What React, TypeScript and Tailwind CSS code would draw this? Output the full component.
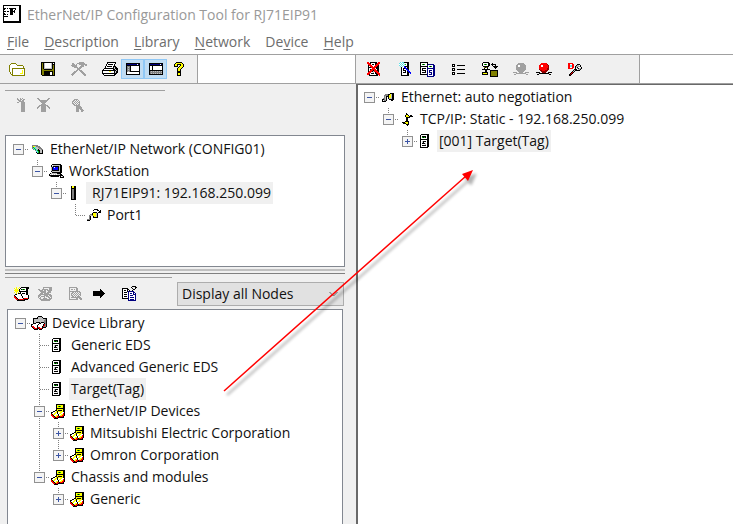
import { useState } from 'react';
import type { ReactNode } from 'react';

const COLORS: Record<string, string> = {
  k: '#000000',
  d: '#404040',
  g: '#808080',
  a: '#a0a0a0',
  s: '#c0c0c0',
  w: '#ffffff',
  o: '#808000',
  y: '#ffff00',
  r: '#ff0000',
  m: '#900000',
  G: '#00c000',
  b: '#0000ff',
  n: '#000080',
  c: '#60e0e8',
};

// Each string is one row of pixels, a dot is transparent.
// The first row sets the width of the icon.
const ICONS = {
  app: [
    'kkkkkkkkkkkkkkkkkk',
    'kwwwwwwwwwwwwwwwkk',
    'kwwwwwwwwwwwwwwwkk',
    'kkkwkwkkkkkkkwwwkk',
    'kkwwwwwkkkwwkwwwkk',
    'kwwwwwwkkkwkwwwwkk',
    'kkkwkkwkkkkkwwwwkk',
    'kwwwwwwkkkwkwwwwkk',
    'kkwwwwwkkkwwwwwwkk',
    'kkkwkwwkkkwwwwwwkk',
    'kwwwwwwwwwwwwwwwkk',
    'kkkkkwwwwwwwwwwwkk',
    'kwwwwwwwwwwwwwwwkk',
    'kwwwwwwwwwwwwwwwkk',
    'kwwwwwwwwwwwwwwwkk',
    'kwwwwwwwwwwwwwwwkk',
    'kkkkkkkkkkkkkkkkkk',
    'kkkkkkkkkkkkkkkkkk',
  ],
  open: [
    '..ooooo.........',
    '.owwwwwo........',
    'owwwwwwwoooooo..',
    'owwwwwwwwwwwwwo.',
    'owwwwwwwwwwwwwo.',
    'owwooooooooooooo',
    'owwowwwwwwwwwwwo',
    'owwowwwwwwwwwywo',
    'owwowwwwwwwwwywo',
    '.owowwwwwwwwwywo',
    '.owowwwwwwwyyywo',
    '..oowwwwwwwwwwwo',
    '...ooooooooooooo',
  ],
  save: [
    'kkkkkkkkkkkkkk',
    'kokswwwwwwskwk',
    'kokswwwwwwskkk',
    'kokswwwwwwskok',
    'kokswwwwwwskok',
    'kokswwwwwwskok',
    'koksssssssskok',
    'kookkkkkkkkook',
    'kooooooooooook',
    'kookkkkkkkkkok',
    'kookkkkkkwwkok',
    'kookkkkkkwwkok',
    'kookkkkkkwwkok',
    '.kkkkkkkkkkkkk',
  ],
  tools: [
    '........aaaaa...',
    '.aa...aaaaaaaa..',
    '.aaa.a..aaaaaaaa',
    'aaaaaa....aaa.aa',
    '.aaaaa...aaaa...',
    '...aaaa.aaa.....',
    '......aaaa......',
    '......aaa.......',
    '.....aa.aaa.....',
    '...aaa...aaa....',
    '..aaa.....aaa...',
    '.aaa.......aaa..',
    'aaa.........aaa.',
    '.a...........aa.',
  ],
  print: [
    '.....kkkkkkkkk..',
    '.....kwwwwwwwk..',
    '....kwkkkkkwk...',
    '....kwwwwwwwk...',
    '...kwkkkkkwkkk..',
    '...kwwwwwwwkskk.',
    '..kkkkkkkkkkskkk',
    '.kwwwwwwwwwkkskk',
    'kkkkkkkkkkkkkksk',
    'kwwwwwwyywwwkskk',
    'kwwwwwwwwwwwkskk',
    'kkkkkkkkkkkkkkk.',
    '.kwwwwwwwwwwkk..',
    '..kkkkkkkkkkk...',
  ],
  viewLeft: [
    'kkkkkkkkkkkkkk',
    'knnnnnnnnnnwnk',
    'kkkkkkkkkkkkkk',
    'kgggkwwwwwwwwk',
    'kgsgkwwwwwwwwk',
    'kgggkwwwwwwwwk',
    'kgsgkwwwwwwwwk',
    'kgggkwwwwwwwwk',
    'kgsgkkkkkkkkkk',
    'kwwwwwwwwwwwwk',
    'kwwwwwwwwwwwwk',
    'kkkkkkkkkkkkkk',
  ],
  viewRight: [
    'kkkkkkkkkkkkkk',
    'knnnnnnnnnnwnk',
    'kkkkkkkkkkkkkk',
    'kwwkwwwwwwwwwk',
    'kwwkwwwwwwwwwk',
    'kwwkwwwwwwwwwk',
    'kwwkwwwwwwwwwk',
    'kkkkkkkkkkkkkk',
    'kgsgsgsgsgsgsk',
    'kggggggggggggk',
    'kgsgsgsgsgsgsk',
    'kkkkkkkkkkkkkk',
  ],
  help: [
    '..kkkkkk..',
    '.kyyyyyyk.',
    'kyykkkkyyk',
    'kyyk..kyyk',
    'kkkk.kyyyk',
    '....kyyyk.',
    '...kyyyk..',
    '...kyyk...',
    '...kyyk...',
    '...kkkk...',
    '...kkkk...',
    '...kyyk...',
    '...kyyk...',
    '...kkkk...',
  ],
  online: [
    'a..a.a..',
    'aa.aa.aa',
    '.aaa.aa.',
    '..aaaaa.',
    'aa..aaaa',
    '....aaaa',
    '....aaaa',
    '....aaaa',
    '....aaaa',
    '....aaaa',
    '....aaaa',
    '....aaaa',
    '....aaaa',
    '....aaaa',
  ],
  offline: [
    'aa.........aa',
    '.aa.......aa.',
    '..aaaaaaaaa..',
    '...aaaaaaa...',
    '....aaaaa....',
    '.....aaa.....',
    '....aaaaa....',
    '..aaaaaaaaa..',
    '.aa.aaaaa.aa.',
    'aa..aaaaa..aa',
    'a...aaaaa...a',
    '....aaaaa....',
    '....aaaaa....',
    '....aaaaa....',
  ],
  search: [
    '..aaaa......',
    '.aa.a.a.....',
    'aa.a.a.a....',
    'a.a.a.aa....',
    'aa.a.a.a....',
    '.aa.a.aa....',
    '..aaaaaa....',
    '....aaaaa...',
    '....aaaaaa..',
    '....aaaaaa..',
    '....aaa.aaa.',
    '....aaa..aaa',
    '....aaa..aa.',
  ],
  server: [
    '.kkkkkkkk....',
    'kwwwwwwkk',
    'kwkkkkwkk',
    'kwGkGkwkk',
    'kwwwwwwkk',
    'kkkkkkkkk',
    'kwwwwwwkk',
    'kwskkkwkk',
    'kwskwwwkk',
    'kwkkkswkk',
    'kwwwwswkk',
    'kwkkkkwkk',
    'kwwwwwwkk',
    'kkkkkkkk.',
  ],
  removeServer: [
    'rr.kkkkkkk.rr',
    'rrrkwwwwkkrrr',
    '.rrrwkkwkrrr.',
    '.krrrwwwrrrk.',
    '.kwrrrwrrrkk.',
    '.kkkrrrrrkkk.',
    '.kwwwrrrwkkk.',
    '.kwkrrrrrwkk.',
    '.kwrrrkrrrkk.',
    '.krrrksrrrrk.',
    '.rrrwwswkrrr.',
    'rrrwkkkwkkrrr',
    'rrkwwwwwwkkrr',
    '..kkkkkkkkk.r',
  ],
  searchServer: [
    '.cwcckkkkk..',
    'cwcwcwwwkk..',
    'wcwcwcGwkk..',
    'cwcwcwwwkk..',
    '.cwcwbkkkk..',
    '..kwwbbwkk..',
    '..kwkkbbkk..',
    '..kwkwwbbk..',
    '..kwkkkwbb..',
    '..kwwwkwkbb.',
    '..kwkkkwkkbb',
    '..kwwwwwkk.b',
    '..kwwwwwkk..',
    '..kkkkkkkk..',
  ],
  compare: [
    'kkkkkkkk.......',
    'kwwwwwwk.......',
    'kwGkGwwknnnnnn.',
    'kwwwwwwnwwwwwnn',
    'kkkkkkkkwGkGwnn',
    'kwwwwwwnwwwwwnn',
    'kwkkkkwnnnnnnnn',
    'kwkwwwwnwwwwwnn',
    'kwkkkkwnwnnnwnn',
    'kwwwwkwnwnwwwnn',
    'kwkkkkwnwnnnwnn',
    'kwwwwwwnwwwnwnn',
    'kkkkkkknwnnnwnn',
    '.......nwwwwwnn',
    '.......nnnnnnn.',
  ],
  list: [
    'kkk..........',
    'kwk..kkkkkkkk',
    'kkk..........',
    '.............',
    'kkk..........',
    'kwk..kkkkkkkk',
    'kkk..........',
    '.............',
    'kkk..........',
    'kwk..kkkkkkkk',
    'kkk..........',
  ],
  transfer: [
    '.kkkkkk.........',
    'kwwwwwkk..k.....',
    'kwGkGwkk.kkkkk..',
    'kwwwwwkk..k..k..',
    '.kkkkkk....kkkkk',
    '..okok......kkk.',
    '..kwwk.......k..',
    'kkkkkkkk........',
    '...kk...kkkkkkkk',
    '...kk...kooooook',
    'kkkkkk..kooooook',
    'kyyyyk..kooooook',
    'kkkkkk..kooooook',
    '........kooooook',
    '........kkkkkkkk',
  ],
  ballGray: [
    '.....aaaaaa.....',
    '....aaaaaaaa....',
    '...aawwaaaaaa...',
    '...aawwaaaaaa...',
    '...aaaaaaaaaa...',
    '...aaaaaaaaaa...',
    '...aaaaaaaaaa...',
    '....aaaaaaaa....',
    '.....aaaaaa.....',
    'aaaa..aaaa..aaaa',
    '...aaaaaaaaaa...',
    '.aa..........aa.',
  ],
  ballRed: [
    '.....rrrrrr.....',
    '....rrrrrrrm....',
    '...rrwwrrrrrm...',
    '...rrwwrrrrrm...',
    '...rrrrrrrrrm...',
    '...rrrrrrrrmm...',
    '...mrrrrrrrmm...',
    '....mmrrrmmm....',
    '.....mmmmmm.....',
    'kkkk..mmmm..kkkk',
    '...kkkkkkkkkk...',
    '.kk..........kk.',
  ],
  diagnose: [
    'rrrrr.........',
    'rrwwrr...kkk..',
    'rrccrr..kaswk.',
    'rrccrr.kasaak.',
    'rrwwrr.kskwwwk',
    'rrrrr..kwaksak',
    '......kkkwsak.',
    '.....kskkkkk..',
    '....ksk.......',
    '...krk........',
    '..krk.........',
    '.kmk..........',
    '.kk...........',
  ],
  newDevice: [
    '..y..y.kkkkkkkk',
    'y.y.y.kwwwwwkkk',
    '.yyy.kwkGkGwkk.',
    'yyyyykwwwwwwkk.',
    '.yyy.kkkkkkkkk.',
    'y.y.y.kwwwwwkk.',
    '..y.kkkwkkkwkk.',
    '.kkwwwwkwwwwkk.',
    'kwwwwwwkwwwwwwk',
    'rkwwwwwwkwwwwwk',
    'rrkwwwwwkwwwwwk',
    '.rrkwwwwwkrrrrk',
    '..rrkrrrrrkkkk.',
    '...kkkkkkkk....',
  ],
  delDevice: [
    '.....aaaaaaaaa',
    '.....a.....aaa',
    'aa..aaaaaa.aaa',
    '.aaaa.aa.aaaaa',
    '..aaaaaa..aaa.',
    '...aaaaa.aaaa.',
    '..aaa.aaaaa...',
    '.aaaaaaaaaaaa.',
    'aaa...aaaa.aaa',
    'aa.aaaa.aaa.aa',
    'a.a...a...aa.a',
    '.aa..aaaa..aaa',
    '..aaaaaaaaaaa.',
    '...aaaaaaaaa..',
  ],
  findDevice: [
    'aaaaaaaa.....',
    'a......aa....',
    'a.aa.a.aa....',
    'a......aa....',
    'aaaaaaaaaaa..',
    'a..aa.a.a.aa.',
    'a.aa.a.a.a.a.',
    'a.a.a.a.a.aa.',
    'a.aa.a.a.a.a.',
    'a..aa.a.aaa..',
    'a.aaaaaaaaaa.',
    'a......aa.aaa',
    'aaaaaaaaa..aa',
  ],
  arrow: [
    '.......k....',
    '.......kk...',
    'kkkkkkkkkk..',
    'kkkkkkkkkkk.',
    'kkkkkkkkkkkk',
    'kkkkkkkkkkk.',
    'kkkkkkkkkk..',
    '.......kk...',
    '.......k....',
  ],
  copy: [
    '..........kkkk..',
    '.........k...kk.',
    'kkkkkk....k..k..',
    'kwwwwkk....kk...',
    'kwkkwkwk..k.....',
    'kwwwwknnnnnn....',
    'kwkkkwnwwwwnn...',
    'kwwwwwnwnnwnwn..',
    'kwkkkwnwwwwnnn..',
    'kwwwwwnwnnnwwn..',
    'kwkkkwnwwwwwwn..',
    'kwwwwwnwnnnnwn..',
    'kkkkkknwwwwwwn..',
    '......nwnnnnwn..',
    '......nnnnnnnn..',
  ],
  network: [
    'gggggg.....',
    'gyysgggg...',
    'gGccssggg..',
    'gcGcsssggg.',
    '.gcGcskssgg',
    '...gcGkkssk',
    '....ccGkssk',
    '....kcGkssk',
    '.....kkkkkk',
  ],
  computer: [
    '...kkkkkkkkk...',
    '..kwssssssskk..',
    '..kskkkkkkskk..',
    '..skbwbbbkskk..',
    '..skbbbbbkskk..',
    '..skbbbbbkskk..',
    '..skkkkkkkskk..',
    '..ksssssssskk..',
    '...kkkkkkkkkk..',
    '.ksssssskkkk...',
    'kwswswswssskk..',
    'kkkkkkkkkkkkkk.',
    '.gkkkkkkkk.kwsk',
    '...........kkkk',
  ],
  module: [
    'kyykk...',
    'kyykk',
    'kkkkk',
    'kggkk',
    'kggkk',
    'kggkk',
    'kggkk',
    'kggkk',
    'kggkk',
    'kggkk',
    'kggkk',
    'kggkk',
    'kggkk',
    'kkkkk',
  ],
  plug: [
    '........kkkk',
    '...gggkkyskk',
    '..ggggkyyskk',
    '..gskkkyyskk',
    '..gsk.kyyskk',
    '.ggsk.kssskk',
    'kkgsk..kkkkk',
    'k.ggk....kk.',
    'kkkk........',
  ],
  tcp: [
    '....k......',
    '....kk.....',
    '...kyyk.kk.',
    '...kyyykkkk',
    '....kkkk...',
    '....kk.....',
    '....kk.....',
    '....kk.....',
    '...kkkk....',
    'kkkyyyk....',
    '.kkkyyk....',
    '....kkk....',
    '.....k.....',
  ],
  port: [
    '.......kkkk...',
    '......k...kk.k',
    '............kk',
    '......kkkk.kkk',
    '.....kyyysk...',
    '...ggkyyysk...',
    '..gssgyyysk...',
    '..gk..kyysk...',
    '..gk..kkkkk...',
    '..gk..........',
    'gggk..........',
    'kkk...........',
  ],
  library: [
    '.......kkkk.....',
    '......kssssk....',
    '..kkkkkssssskkkk',
    '..ksssssssssssgk',
    '..kssssssssssggk',
    '..kssssssssssggk',
    '..ksskkkkskkkggk',
    '..kkkwwwkkwwwkgk',
    'kkwwwwwkwwwwkrgk',
    'kwwwwwkwwwwwkrgk',
    'krrwwwkwwwwkrggk',
    '.krrwwkrrwwkkkk.',
    '..krrrkkrrrk....',
    '...kkkk.kkk.....',
  ],
  catalog: [
    '.....kkkkkkkkk',
    '.....kyyyyyykk',
    '.....kyGkGyykk',
    '.....kyyyyyykk',
    '.....kkkkkkkkk',
    '.....kyyyyyykk',
    '....kkykkkkykk',
    '..kkwykyyyyykk',
    'kkwwyykwwyywwk',
    'kwwyywkwyywwrk',
    'rkyywwwkwwyyrk',
    'rrkwwyykwyyrrk',
    '.rrkyyrrkrrrk.',
    '..rrkrrkkkkkk.',
    '...kkkk.......',
  ],
};

type IconName = keyof typeof ICONS;

function PixelIcon({ name }: { name: IconName }) {
  const rows: string[] = ICONS[name];
  const width = rows[0].length;
  const paths: Record<string, string> = {};
  rows.forEach((row, y) => {
    row.split('').forEach((ch, x) => {
      if (ch === '.') return;
      paths[ch] = (paths[ch] || '') + `M${x} ${y}h1v1h-1z`;
    });
  });
  return (
    <svg width={width} height={rows.length} viewBox={`0 0 ${width} ${rows.length}`} shapeRendering="crispEdges" className="shrink-0" aria-hidden="true">
      {Object.entries(paths).map(([ch, d]) => (
        <path key={ch} d={d} fill={COLORS[ch]} />
      ))}
    </svg>
  );
}

interface ToolProps {
  icon: IconName;
  label: string;
  pressed?: boolean;
  disabled?: boolean;
}

function Tool({ icon, label, pressed, disabled }: ToolProps) {
  return (
    <button
      aria-label={label}
      aria-pressed={pressed}
      disabled={disabled}
      className={`flex h-5 w-[23px] shrink-0 items-center justify-center ${pressed ? 'border border-[#90c8f6] bg-[#c0dcf3]' : ''}`}
    >
      <PixelIcon name={icon} />
    </button>
  );
}

function ToolGroup({ children }: { children: ReactNode }) {
  return <div className="flex items-center">{children}</div>;
}

interface TreeNode {
  label: string;
  icon: IconName;
  selected?: boolean;
  open?: boolean;
  expandable?: boolean;
  wide?: boolean;
  children?: TreeNode[];
}

const NETWORK_TREE: TreeNode = {
  label: 'EtherNet/IP Network (CONFIG01)',
  icon: 'network',
  open: true,
  children: [
    {
      label: 'WorkStation',
      icon: 'computer',
      open: true,
      children: [
        {
          label: 'RJ71EIP91: 192.168.250.099',
          icon: 'module',
          open: true,
          selected: true,
          wide: true,
          children: [{ label: 'Port1', icon: 'port' }],
        },
      ],
    },
  ],
};

const LIBRARY_TREE: TreeNode = {
  label: 'Device Library',
  icon: 'library',
  open: true,
  children: [
    { label: 'Generic EDS', icon: 'server' },
    { label: 'Advanced Generic EDS', icon: 'server' },
    { label: 'Target(Tag)', icon: 'server', selected: true },
    {
      label: 'EtherNet/IP Devices',
      icon: 'catalog',
      open: true,
      children: [
        { label: 'Mitsubishi Electric Corporation', icon: 'catalog', expandable: true },
        { label: 'Omron Corporation', icon: 'catalog', expandable: true },
      ],
    },
    {
      label: 'Chassis and modules',
      icon: 'catalog',
      open: true,
      children: [{ label: 'Generic', icon: 'catalog', expandable: true }],
    },
  ],
};

const ETHERNET_TREE: TreeNode = {
  label: 'Ethernet: auto negotiation',
  icon: 'plug',
  open: true,
  children: [
    {
      label: 'TCP/IP: Static - 192.168.250.099',
      icon: 'tcp',
      open: true,
      children: [{ label: '[001] Target(Tag)', icon: 'server', expandable: true, selected: true }],
    },
  ],
};

interface JointProps {
  up?: boolean;
  down?: boolean;
  right?: boolean;
  box?: 'plus' | 'minus';
}

// One 19px cell of the dotted tree lines, with the +/- box when there is one
function Joint({ up, down, right, box }: JointProps) {
  return (
    <svg width="19" height="22" viewBox="0 0 19 22" className="block shrink-0" shapeRendering="crispEdges" aria-hidden="true">
      <g stroke="#808080" strokeDasharray="1 1" fill="none">
        {up && <path d="M9.5 0V11" />}
        {down && <path d="M9.5 12V22" />}
        {right && <path d="M10 11.5H19" />}
      </g>
      {box && (
        <>
          <rect x="4.5" y="6.5" width="10" height="10" fill="#f4f4f4" stroke="#919191" />
          <path d="M7 11.5H12" stroke="#3c55a5" />
          {box === 'plus' && <path d="M9.5 9V14" stroke="#3c55a5" />}
        </>
      )}
    </svg>
  );
}

interface TreeItemProps {
  node: TreeNode;
  root?: boolean;
  last?: boolean;
  guides?: boolean[];
}

function TreeItem({ node, root = false, last = true, guides = [] }: TreeItemProps) {
  const [open, setOpen] = useState(!!node.open);
  const expandable = !!node.children || !!node.expandable;
  const joint = <Joint up={!root} down={!root && !last} right box={expandable ? (open ? 'minus' : 'plus') : undefined} />;

  return (
    <li role="treeitem" aria-expanded={expandable ? open : undefined} aria-selected={!!node.selected}>
      <div className="flex h-[22px] items-center">
        {guides.map((line, i) => (
          <Joint key={i} up={line} down={line} />
        ))}
        {expandable ? (
          <button aria-label={`Toggle ${node.label}`} onClick={() => setOpen(!open)}>
            {joint}
          </button>
        ) : (
          joint
        )}
        <span className="flex w-[18px] shrink-0 justify-center">
          <PixelIcon name={node.icon} />
        </span>
        <span
          className={`ml-0.5 h-[22px] leading-[21px] whitespace-nowrap ${node.wide ? 'pr-0.5 pl-1.5' : 'px-0.5'} ${node.selected ? 'bg-[#f0f0f0]' : ''}`}
        >
          {node.label}
        </span>
      </div>
      {open && node.children && (
        <ul role="group">
          {node.children.map((child, i) => (
            <TreeItem
              key={child.label}
              node={child}
              last={i === node.children!.length - 1}
              guides={[...guides, !root && !last]}
            />
          ))}
        </ul>
      )}
    </li>
  );
}

const MENU = [
  ['', 'F', 'ile'],
  ['', 'D', 'escription'],
  ['', 'L', 'ibrary'],
  ['', 'N', 'etwork'],
  ['De', 'v', 'ice'],
  ['', 'H', 'elp'],
];

export default function App() {
  return (
    <div className="relative flex min-h-screen flex-col overflow-hidden bg-white font-['Open_Sans','Noto_Sans',sans-serif] text-[14px] text-[#111111]">
      {/* Title bar */}
      <header className="flex h-7 items-center gap-1.5 pl-[3px] text-[#999999]">
        <PixelIcon name="app" />
        <h1 className="whitespace-nowrap">EtherNet/IP Configuration Tool for RJ71EIP91</h1>
      </header>

      {/* Menu bar */}
      <nav className="flex h-[26px] items-center gap-[15px] pl-[7px] text-[#6d6d6d]">
        {MENU.map(([before, key, after]) => (
          <button key={key}>
            {before}
            <span className="underline underline-offset-2">{key}</span>
            {after}
          </button>
        ))}
      </nav>

      {/* Main toolbars */}
      <div className="flex h-[30px] border-y border-[#a0a0a0]">
        <div className="flex w-[355px] shrink-0">
          <div className="flex w-[198px] items-center gap-2 border-r border-[#a0a0a0] bg-[#f0f0f0] pl-[5px]">
            <Tool icon="open" label="Open" />
            <Tool icon="save" label="Save" />
            <Tool icon="tools" label="Options" disabled />
            <ToolGroup>
              <Tool icon="print" label="Print" />
              <Tool icon="viewLeft" label="Network view" pressed />
              <Tool icon="viewRight" label="Library view" pressed />
              <Tool icon="help" label="Help" />
            </ToolGroup>
          </div>
        </div>
        <div className="flex w-[285px] items-center gap-2 border-x border-[#a0a0a0] bg-[#f0f0f0] pl-1.5">
          <Tool icon="removeServer" label="Remove device" />
          <ToolGroup>
            <Tool icon="searchServer" label="Find device" />
            <Tool icon="compare" label="Compare devices" />
          </ToolGroup>
          <Tool icon="list" label="List" />
          <Tool icon="transfer" label="Download" />
          <ToolGroup>
            <Tool icon="ballGray" label="Go online" disabled />
            <Tool icon="ballRed" label="Go offline" />
          </ToolGroup>
          <Tool icon="diagnose" label="Diagnose" />
        </div>
      </div>

      <div className="flex flex-1">
        {/* Network and library panes */}
        <aside className="flex w-[356px] shrink-0 flex-col bg-[#f0f0f0] pt-1.5">
          <div className="ml-[5px] w-40 border-t border-[#a0a0a0]" />
          <div className="flex h-11 items-start gap-[11px] pt-1 pl-[9px]">
            <ToolGroup>
              <Tool icon="online" label="Connect" disabled />
              <Tool icon="offline" label="Disconnect" disabled />
            </ToolGroup>
            <Tool icon="search" label="Search network" disabled />
          </div>
          <ul role="tree" aria-label="Network" className="mr-[11px] ml-[5px] h-[132px] border border-[#828790] bg-white pt-0.5 pl-[3px]">
            <TreeItem node={NETWORK_TREE} root />
          </ul>
          <div className="mt-0.5 mr-[11px] ml-[5px] h-[5px] border-t-2 border-b border-t-[#c0c0c0] border-b-[#808080]" />
          <div className="mt-[3px] ml-[5px] w-[167px] border-t border-[#a0a0a0]" />
          <div className="flex h-[31px] items-center gap-2 pl-2.5">
            <ToolGroup>
              <Tool icon="newDevice" label="Add to library" />
              <Tool icon="delDevice" label="Delete from library" disabled />
            </ToolGroup>
            <ToolGroup>
              <Tool icon="findDevice" label="Find in library" disabled />
              <Tool icon="arrow" label="Insert in configuration" />
            </ToolGroup>
            <Tool icon="copy" label="Properties" />
            <div className="relative mr-3 ml-7 flex-1">
              <select aria-label="Node filter" className="h-6 w-full appearance-none border border-[#adadad] bg-[#e1e1e1] pl-1 text-[14px] leading-5">
                <option>Display all Nodes</option>
              </select>
              <svg className="pointer-events-none absolute top-2 right-1.5" width="9" height="8" viewBox="0 0 9 8" fill="none" stroke="#606060">
                <path d="M0.5 2L4.5 6L8.5 2" />
              </svg>
            </div>
          </div>
          <ul role="tree" aria-label="Device library" className="mr-[13px] ml-[7px] flex-1 border border-b-0 border-[#828790] bg-white pt-0.5 pl-[3px]">
            <TreeItem node={LIBRARY_TREE} root />
          </ul>
        </aside>

        {/* Configuration pane */}
        <main className="flex-1 border-t border-l-2 border-[#696969] bg-white">
          <ul role="tree" aria-label="Configuration" className="pt-px pl-0.5">
            <TreeItem node={ETHERNET_TREE} root />
          </ul>
        </main>
      </div>

      {/* Drag arrow from the library to the configuration */}
      <svg className="pointer-events-none absolute top-40 left-52" width="280" height="244" viewBox="208 160 280 244" fill="none">
        <defs>
          <filter id="soft" x="-10%" y="-10%" width="120%" height="120%">
            <feGaussianBlur stdDeviation="1.5" />
          </filter>
        </defs>
        <g stroke="#000000" fill="#000000" opacity="0.3" filter="url(#soft)" transform="translate(3 4)">
          <path d="M224 391L466 176" strokeWidth="2" />
          <path d="M473 170L468 181L462 174Z" />
        </g>
        <path d="M224 391L466 176" stroke="#ff0000" strokeWidth="1.5" />
        <path d="M473 170L468 181L462 174Z" fill="#ff0000" />
      </svg>
    </div>
  );
}
